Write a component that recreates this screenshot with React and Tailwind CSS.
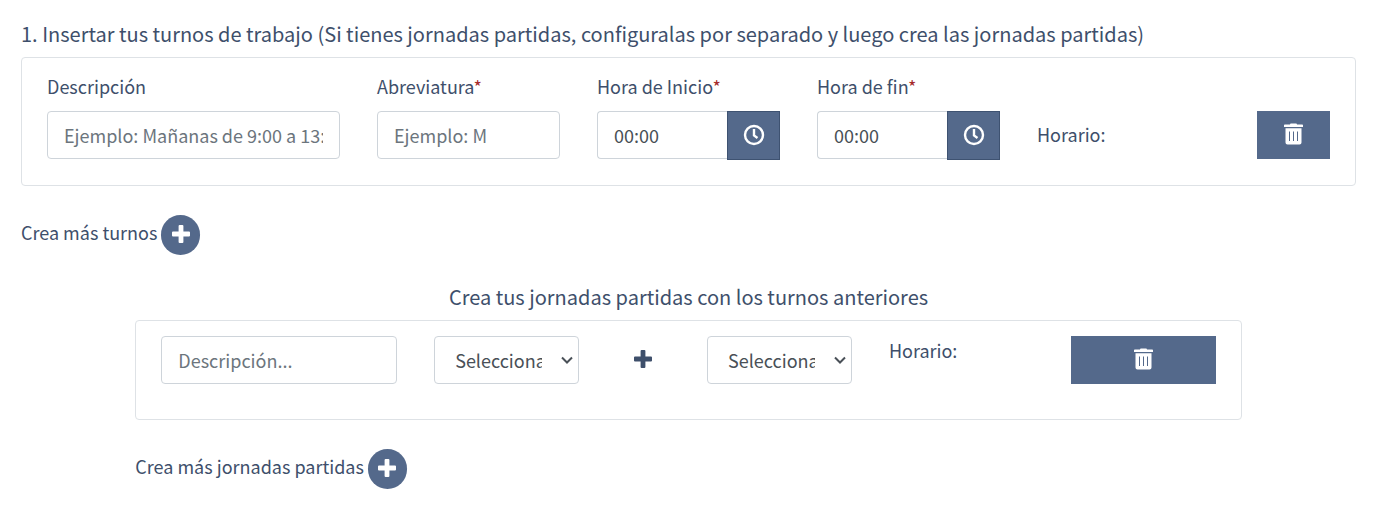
import React, { useState } from "react";

const inputClass =
  "block h-12 w-full min-w-0 rounded border border-[#ced4da] bg-white px-4 text-lg text-[#495057] placeholder:text-[#6c757d] placeholder:opacity-100";

const TrashIcon = () => (
  <svg width="19" height="22" viewBox="0 0 19 22" aria-hidden="true">
    <path
      fill="#fff"
      fillRule="evenodd"
      d="M6 1.500Q6 .500 7 .500h5q1 0 1 1h5.200q.800 0 .800.800V4H0V2.300q0-.800.800-.800zM1.500 5.200h16V19.500q0 2-2 2h-12q-2 0-2-2zM5 8.500v9.500h1V8.500zm4 0v9.500h1V8.500zm4 0v9.500h1V8.500z"
    />
  </svg>
);

const ClockIcon = () => (
  <svg width="22" height="22" viewBox="0 0 22 22" fill="none" stroke="#fff" aria-hidden="true">
    <circle cx="11" cy="11" r="9" strokeWidth="2.4" />
    <path d="M11 5v6.500l3.500 2.500" strokeWidth="2.4" />
  </svg>
);

const PlusIcon = () => (
  <svg width="18" height="18" viewBox="0 0 18 18" fill="currentColor" aria-hidden="true">
    <path d="M7.600 0h2.800q1 0 1 1v5.600H17q1 0 1 1v2.800q0 1-1 1h-5.600V17q0 1-1 1H7.600q-1 0-1-1v-5.600H1q-1 0-1-1V7.600q0-1 1-1h5.600V1q0-1 1-1z" />
  </svg>
);

const Field = ({ id, label, required, className, children }) => (
  <div className={className}>
    <label htmlFor={id} className="mb-[11px] block text-lg leading-7">
      {label}
      {required && <span className="text-[#a52a2a]">*</span>}
    </label>
    {children}
  </div>
);

const TimeInput = ({ id, value, onChange }) => (
  <div className="flex">
    <input
      id={id}
      type="text"
      value={value}
      onChange={(e) => onChange(e.target.value)}
      className={`${inputClass} flex-1 rounded-r-none border-r-0`}
    />
    <button
      type="button"
      aria-label="Elegir hora"
      className="flex h-[49px] w-[53px] shrink-0 items-center justify-center border border-[#3e5271] bg-[#54698b] pb-0.5"
    >
      <ClockIcon />
    </button>
  </div>
);

const DeleteButton = () => (
  <button
    type="button"
    aria-label="Eliminar"
    className="flex h-12 w-full items-center justify-center bg-[#54698b] pb-0.5"
  >
    <TrashIcon />
  </button>
);

const AddRow = ({ id, text }) => (
  <div className="flex items-center gap-1">
    <label htmlFor={id} className="pb-1.5 text-lg leading-7">
      {text}
    </label>
    <button
      id={id}
      type="button"
      className="flex h-10 w-[39px] items-center justify-center rounded-full bg-[#54698b] pb-0.5 text-white"
    >
      <PlusIcon />
    </button>
  </div>
);

const TurnoSelect = ({ label }) => (
  <div className="relative">
    <select
      aria-label={label}
      className="block h-12 w-full appearance-none rounded border border-[#ced4da] bg-white pr-9 pl-5 text-lg text-[#495057]"
    >
      <option>Selecciona...</option>
    </select>
    <svg
      className="pointer-events-none absolute top-5 right-1.5"
      width="12"
      height="9"
      viewBox="0 0 12 9"
      fill="none"
      stroke="#495057"
      strokeWidth="2"
      aria-hidden="true"
    >
      <path d="M1 1.500l5 5 5-5" />
    </svg>
  </div>
);

const App = () => {
  const [inicio, setInicio] = useState("00:00");
  const [fin, setFin] = useState("00:00");

  return (
    <main className="bg-white pt-5 pr-5 pb-10 pl-[21px] font-['Noto_Sans_CJK_SC',sans-serif] text-[#3e4f6b]">
      {/* Turnos */}
      <h1 className="mb-[9px] text-xl leading-7">
        1. Insertar tus turnos de trabajo (Si tienes jornadas partidas, configuralas por separado y
        luego crea las jornadas partidas)
      </h1>
      <section className="grid grid-cols-12 gap-x-[37px] rounded border border-[#dee2e6] px-[25px] pt-3.5 pb-[25px]">
        <Field id="descripcion" label="Descripción" className="col-span-3">
          <input
            id="descripcion"
            type="text"
            placeholder="Ejemplo: Mañanas de 9:00 a 13:00"
            className={inputClass}
          />
        </Field>
        <Field id="abreviatura" label="Abreviatura" required className="col-span-2">
          <input id="abreviatura" type="text" placeholder="Ejemplo: M" className={inputClass} />
        </Field>
        <Field id="inicio" label="Hora de Inicio" required className="col-span-2">
          <TimeInput id="inicio" value={inicio} onChange={setInicio} />
        </Field>
        <Field id="fin" label="Hora de fin" required className="col-span-2">
          <TimeInput id="fin" value={fin} onChange={setFin} />
        </Field>
        <p className="col-span-2 h-[49px] self-end pt-[9px] text-lg leading-7">Horario:</p>
        <div className="h-[49px] self-end">
          <DeleteButton />
        </div>
      </section>
      <div className="mt-[29px]">
        <AddRow id="mas-turnos" text="Crea más turnos" />
      </div>

      {/* Jornadas partidas */}
      <div className="mt-7 grid grid-cols-12 gap-x-[37px]">
        <div className="col-span-10 col-start-2">
          <h2 className="mb-[9px] text-center text-xl leading-7">
            Crea tus jornadas partidas con los turnos anteriores
          </h2>
          <section className="grid grid-cols-12 gap-x-[37px] rounded border border-[#dee2e6] px-[25px] pt-[15px] pb-[35px]">
            <input
              type="text"
              aria-label="Descripción"
              placeholder="Descripción..."
              className={`${inputClass} col-span-3`}
            />
            <div className="col-span-2">
              <TurnoSelect label="Primer turno" />
            </div>
            <div className="flex h-12 items-center justify-center pb-0.5">
              <PlusIcon />
            </div>
            <div className="col-span-2 col-start-7">
              <TurnoSelect label="Segundo turno" />
            </div>
            <p className="col-span-2 text-lg leading-7">Horario:</p>
            <div className="col-span-2">
              <DeleteButton />
            </div>
          </section>
          <div className="mt-[29px]">
            <AddRow id="mas-jornadas" text="Crea más jornadas partidas" />
          </div>
        </div>
      </div>
    </main>
  );
};

export default App;
